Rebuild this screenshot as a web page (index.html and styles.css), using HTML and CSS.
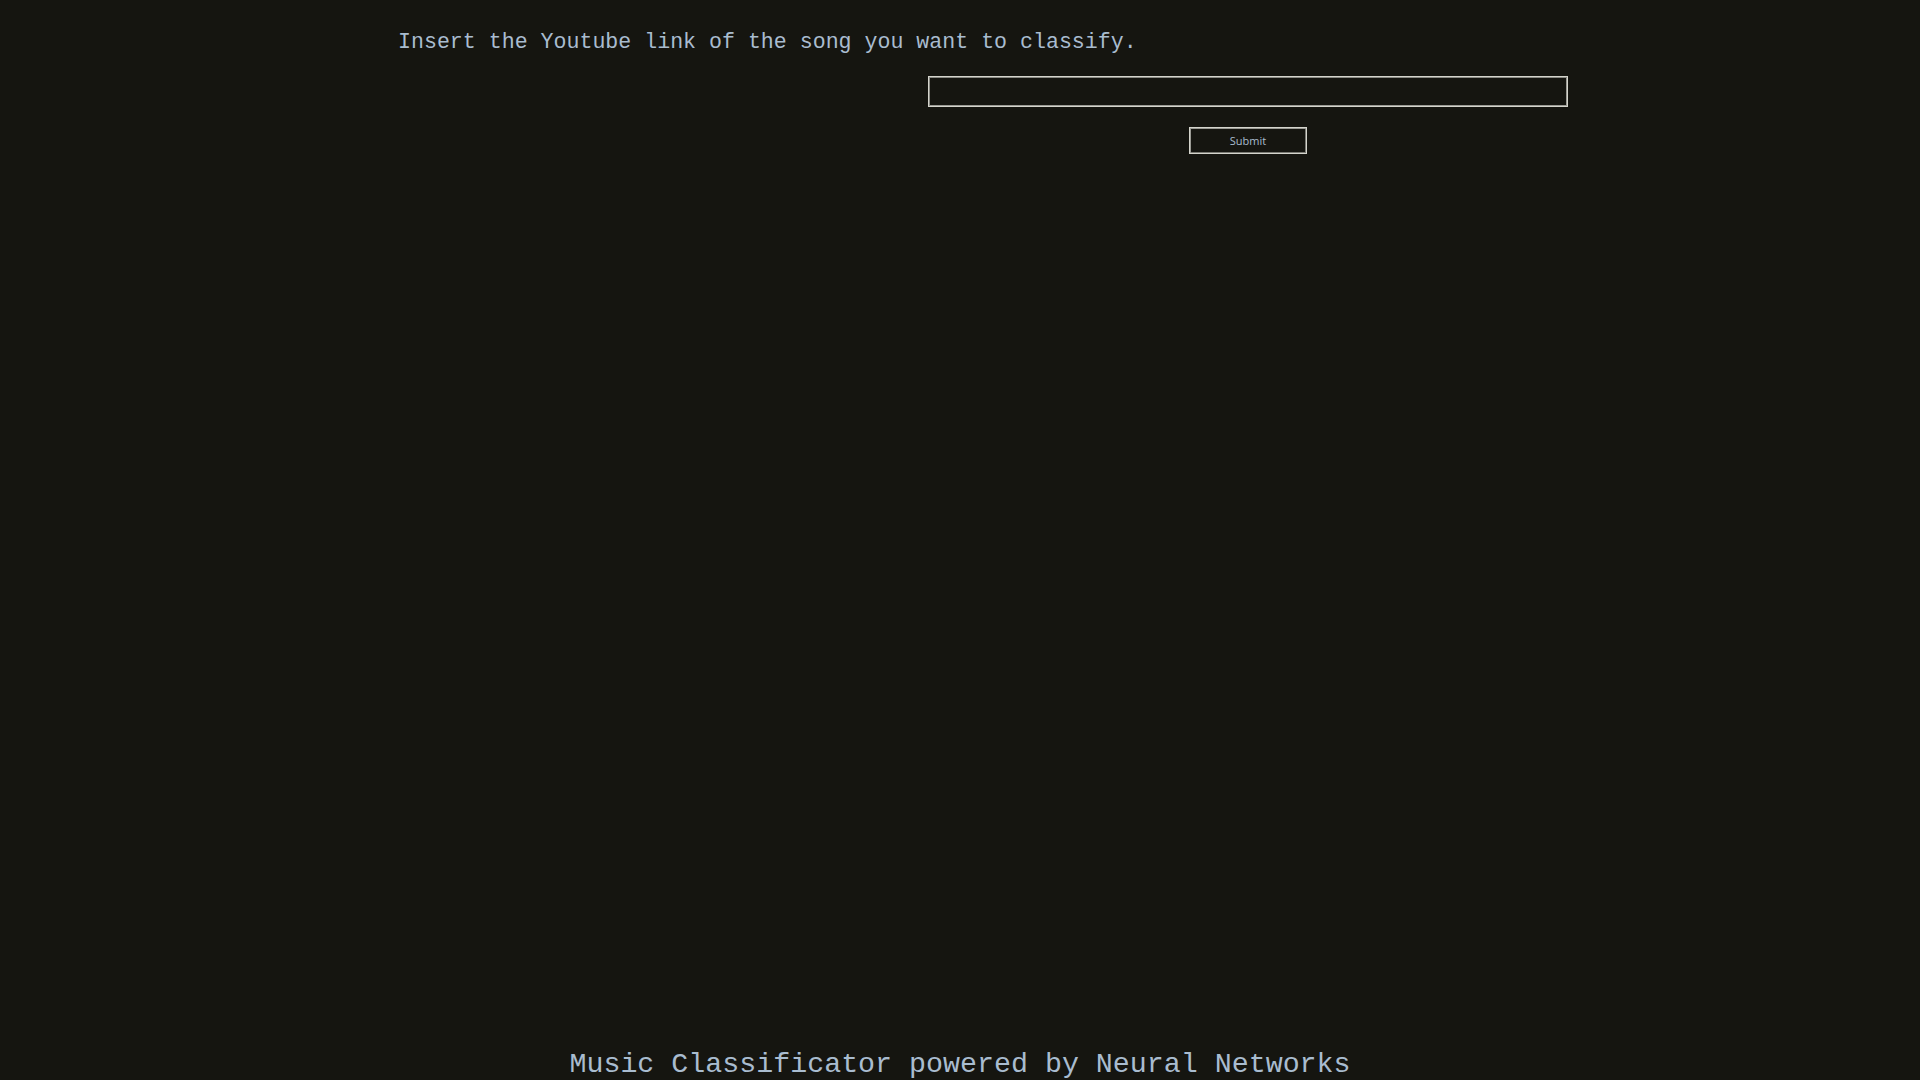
FILE: index.html
```html
<!DOCTYPE html>
<html>
<head>
<meta charset="utf-8">
<title>Music Classificator</title>
<link rel="stylesheet" href="styles.css">
</head>
<body>
<div class="page">
  <main class="content">
    <p class="prompt">Insert the Youtube link of the song you want to classify.</p>
    <form class="link-form" onsubmit="return false;">
      <input class="link-input" type="text" name="link">
      <button class="submit-btn" type="submit">Submit</button>
    </form>
  </main>
  <footer class="footer">Music Classificator powered by Neural Networks</footer>
</div>
</body>
</html>
```

FILE: styles.css
```css
html, body {
  margin: 0;
  padding: 0;
  background: #151510;
  height: 100%;
  overflow: hidden;
}

.page {
  height: 100vh;
  display: flex;
  flex-direction: column;
  color: #a9bccf;
  font-family: "Liberation Mono", "Courier New", monospace;
}

.content {
  padding-left: 398px;
  padding-top: 30px;
}

.prompt {
  margin: 0;
  font-size: 21.6px;
  line-height: normal;
}

.link-form {
  margin-top: 22px;
  margin-left: 530px;
  width: 640px;
  display: flex;
  flex-direction: column;
  align-items: center;
  gap: 20px;
}

.link-input {
  box-sizing: border-box;
  width: 640px;
  height: 31px;
  margin: 0;
  background: #151510;
  border: 1px solid #d4d4cc;
  box-shadow: inset 1px 1px 0 #8a8a84, inset -1px -1px 0 #9a9a94;
  color: #a9bccf;
  font-family: "Open Sans", sans-serif;
  font-size: 13px;
  padding: 2px 6px;
  outline: none;
}

.submit-btn {
  box-sizing: border-box;
  width: 118px;
  height: 27px;
  margin: 0;
  background: #151510;
  border: 1px solid #d4d4cc;
  box-shadow: inset 1px 1px 0 #9a9a94, inset -1px -1px 0 #7a7a74;
  color: #a9bccf;
  font-family: "Open Sans", sans-serif;
  font-size: 11px;
  padding: 0;
  cursor: pointer;
}

.footer {
  margin-top: auto;
  text-align: center;
  font-size: 28.3px;
  line-height: normal;
}
```
